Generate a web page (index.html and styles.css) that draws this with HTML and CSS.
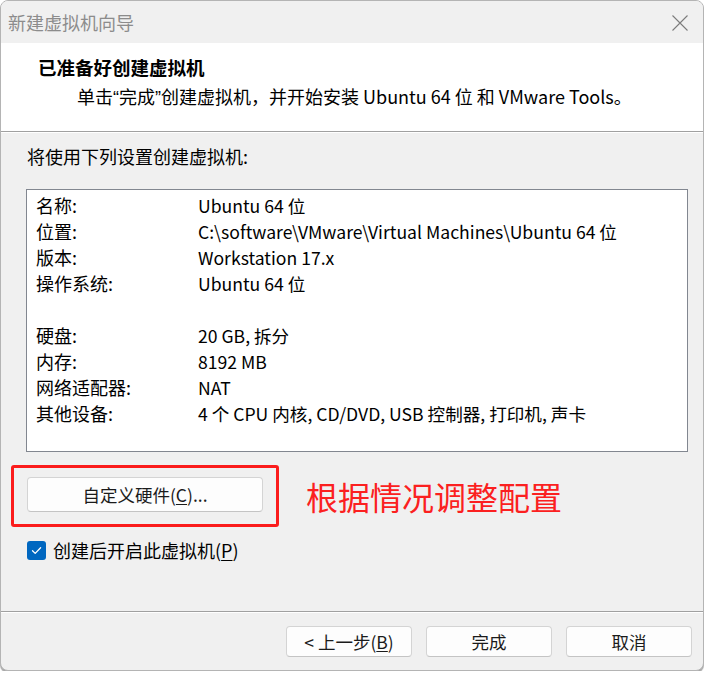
FILE: index.html
```html
<!DOCTYPE html>
<html lang="zh-CN">
<head>
<meta charset="utf-8">
<title>新建虚拟机向导</title>
<link rel="stylesheet" href="styles.css">
</head>
<body>
<div class="window">
  <div class="titlebar">
    <span class="title">新建虚拟机向导</span>
    <svg class="close" width="16" height="16" viewBox="0 0 16 16"><path d="M0.5 0.5 L15.5 15.5 M15.5 0.5 L0.5 15.5" stroke="#7c7c7c" stroke-width="1.1" fill="none"/></svg>
  </div>
  <div class="header">
    <div class="heading">已准备好创建虚拟机</div>
    <div class="subtitle">单击<span class="q">“</span>完成<span class="q">”</span>创建虚拟机，并开始安装 Ubuntu 64 位 和 VMware Tools。</div>
  </div>
  <div class="content">
    <div class="intro">将使用下列设置创建虚拟机:</div>
    <div class="summary">
      <div class="row"><span class="k">名称:</span><span class="v">Ubuntu 64 位</span></div>
      <div class="row"><span class="k">位置:</span><span class="v">C:\software\VMware\Virtual Machines\Ubuntu 64 位</span></div>
      <div class="row"><span class="k">版本:</span><span class="v">Workstation 17.x</span></div>
      <div class="row"><span class="k">操作系统:</span><span class="v">Ubuntu 64 位</span></div>
      <div class="row"></div>
      <div class="row"><span class="k">硬盘:</span><span class="v">20 GB, 拆分</span></div>
      <div class="row"><span class="k">内存:</span><span class="v">8192 MB</span></div>
      <div class="row"><span class="k">网络适配器:</span><span class="v">NAT</span></div>
      <div class="row"><span class="k">其他设备:</span><span class="v">4 个 CPU 内核, CD/DVD, USB 控制器, 打印机, 声卡</span></div>
    </div>
    <div class="custom-row">
      <div class="highlight"><div class="btn wide">自定义硬件(<u>C</u>)...</div></div>
      <span class="note">根据情况调整配置</span>
    </div>
    <div class="check">
      <span class="box"><svg width="19" height="19" viewBox="0 0 19 19"><path d="M5.5 9.8 L8.2 12.4 L13.6 6.8" stroke="#fff" stroke-width="1.3" fill="none" stroke-linecap="round" stroke-linejoin="round"/></svg></span>
      <span class="check-label">创建后开启此虚拟机(<u>P</u>)</span>
    </div>
  </div>
  <div class="footer">
    <div class="btn">&lt; 上一步(<u>B</u>)</div>
    <div class="btn">完成</div>
    <div class="btn">取消</div>
  </div>
</div>
</body>
</html>
```

FILE: styles.css
```css
html, body {
  margin: 0;
  padding: 0;
  background: #ffffff;
}
body {
  font-family: "Noto Sans CJK SC", "Noto Sans", sans-serif;
  font-size: 18px;
  color: #000;
}
.window {
  width: 704px;
  height: 671px;
  box-sizing: border-box;
  border: 1px solid #b4b4b4;
  border-radius: 8px;
  overflow: hidden;
  display: flex;
  flex-direction: column;
  background: #f0f0f0;
  box-shadow: 0 2px 1px #a8a8a8;
}
.titlebar {
  height: 42px;
  flex: none;
  display: flex;
  align-items: center;
  justify-content: space-between;
  padding: 0 15px 0 7px;
  background: #f0f0f0;
}
.title {
  color: #8c8c8c;
  font-size: 18px;
  line-height: 24px;
}
.close {
  display: block;
  margin-top: 1px;
}
.header {
  height: 89px;
  flex: none;
  box-sizing: border-box;
  background: #fff;
  border-bottom: 1px solid #a0a0a0;
  padding: 12px 0 0 37px;
}
.heading {
  font-weight: bold;
  font-size: 18.5px;
  line-height: 24px;
}
.subtitle {
  margin: 5px 0 0 39px;
  line-height: 24px;
  font-size: 18px;
  white-space: nowrap;
}
.q {
  font-family: "Liberation Sans", sans-serif;
}
.content {
  height: 479px;
  flex: none;
  box-sizing: border-box;
  border-top: 1px solid #fff;
  display: flex;
  flex-direction: column;
}
.intro {
  margin: 11px 0 0 26px;
  line-height: 24px;
}
.summary {
  margin: 21px 15px 0 25px;
  height: 263px;
  box-sizing: border-box;
  border: 1px solid #828790;
  background: #fff;
  padding: 2px 0 0 9px;
}
.row {
  height: 26px;
  display: flex;
  align-items: center;
}
.k {
  width: 162px;
  flex: none;
}
.v {
  white-space: nowrap;
  font-size: 17.6px;
}
.custom-row {
  margin: 13px 0 0 10px;
  display: flex;
  align-items: center;
}
.highlight {
  border: 3px solid #fb1c1c;
  border-radius: 3px;
  padding: 9px 13px 12px 13px;
}
.btn {
  box-sizing: border-box;
  height: 31px;
  width: 126px;
  display: flex;
  align-items: center;
  justify-content: center;
  background: #fdfdfd;
  border: 1px solid #d4d4d4;
  border-bottom-color: #c4c4c4;
  border-radius: 4px;
  font-size: 17.5px;
  color: #1b1b1b;
}
.btn.wide {
  width: 236px;
  height: 35px;
}
.note {
  margin-left: 27px;
  color: #fb2020;
  font-size: 32px;
  line-height: 40px;
}
.check {
  margin: 11px 0 0 26px;
  display: flex;
  align-items: center;
  height: 24px;
}
.box {
  width: 19px;
  height: 19px;
  background: #0067c0;
  border-radius: 3px;
  display: block;
}
.box svg {
  display: block;
}
.check-label {
  margin-left: 7px;
  line-height: 24px;
}
.footer {
  flex: 1;
  border-top: 1px solid #a0a0a0;
  box-shadow: inset 0 1px #fff;
  display: flex;
  justify-content: flex-end;
  align-items: flex-start;
  gap: 14px;
  padding: 14px 11px 0 0;
}
u {
  text-underline-offset: 2px;
}
```
